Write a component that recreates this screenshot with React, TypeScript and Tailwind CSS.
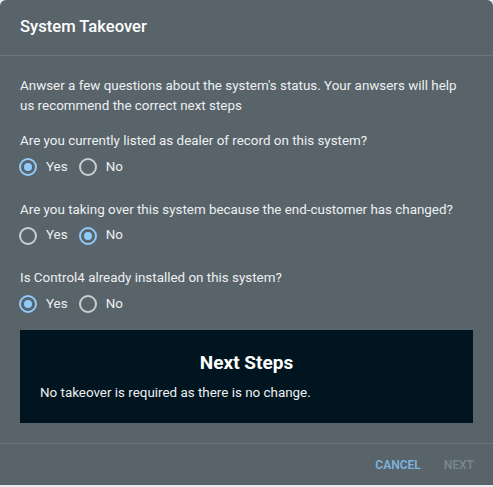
import React from "react";

type Option = { label: string; checked: boolean };

const Radio: React.FC<Option> = ({ label, checked }) => (
    <label className="flex items-center gap-[9px] h-6">
        <span
            className={
                "flex items-center justify-center w-[18px] h-[18px] rounded-full border-2 " +
                (checked ? "border-[#90caf9]" : "border-[#c9ced1]")
            }
        >
            {checked && <span className="w-2 h-2 rounded-full bg-[#90caf9]" />}
        </span>
        <span className="text-[13.4px] text-[#eef0f1]">{label}</span>
    </label>
);

const Question: React.FC<{ text: string; yes: boolean }> = ({ text, yes }) => (
    <div className="flex flex-col gap-1">
        <p className="text-[13.4px] leading-5 text-[#eef0f1]">{text}</p>
        <div className="flex items-center gap-[11px] -ml-[1px]">
            <Radio label="Yes" checked={yes} />
            <Radio label="No" checked={!yes} />
        </div>
    </div>
);

const App: React.FC = () => {
    return (
        <div className="w-[493px] h-[487px] bg-[#e8eaeb] font-['Roboto',sans-serif]">
            <div className="h-[485px] bg-[#58636a] rounded-t-md flex flex-col">
                {/* Header */}
                <div className="h-[56px] px-5 flex items-center border-b border-[#6c777d]">
                    <h1 className="text-[16.6px] font-medium text-white">System Takeover</h1>
                </div>

                {/* Content */}
                <div className="px-5 pt-5 flex flex-col">
                    <p className="text-[13.4px] leading-5 text-[#eef0f1] pr-2">
                        Anwser a few questions about the system's status. Your anwsers will help
                        us recommend the correct next steps
                    </p>
                    <div className="mt-[15px] flex flex-col gap-[20.5px]">
                        <Question text="Are you currently listed as dealer of record on this system?" yes />
                        <Question text="Are you taking over this system because the end-customer has changed?" yes={false} />
                        <Question text="Is Control4 already installed on this system?" yes />
                    </div>

                    {/* Next Steps */}
                    <div className="mt-[14px] h-[93px] bg-[#011520] px-5 pt-[21px]">
                        <h2 className="text-[19px] leading-6 font-bold text-white text-center">Next Steps</h2>
                        <p className="mt-2 text-[13.4px] leading-5 text-[#eef0f1]">
                            No takeover is required as there is no change.
                        </p>
                    </div>
                </div>

                {/* Footer */}
                <div className="mt-5 flex-1 border-t border-[#6c777d] flex items-center justify-end gap-[23px] pr-[19px]">
                    <button className="text-[12px] font-semibold text-[#7db4de]">CANCEL</button>
                    <button className="text-[12px] font-semibold text-[#7b868b]">NEXT</button>
                </div>
            </div>
        </div>
    );
};

export default App;
